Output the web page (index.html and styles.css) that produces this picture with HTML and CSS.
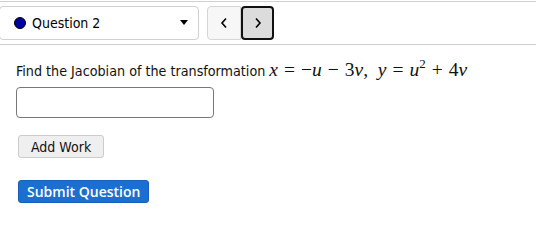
FILE: index.html
```html
<!DOCTYPE html>
<html>
<head>
<meta charset="utf-8">
<link rel="stylesheet" href="styles.css">
</head>
<body>
<div class="topbar">
  <div class="select">
    <span class="dot"></span>
    <span class="qlabel">Question 2</span>
    <span class="caret"></span>
  </div>
  <div class="nav">
    <button class="navbtn prev">
      <svg width="8" height="12" viewBox="0 0 8 12"><path d="M6 1.5 L2 6 L6 10.5" fill="none" stroke="#000" stroke-width="1.6"/></svg>
    </button>
    <button class="navbtn next">
      <svg width="8" height="12" viewBox="0 0 8 12"><path d="M2 1.5 L6 6 L2 10.5" fill="none" stroke="#000" stroke-width="1.6"/></svg>
    </button>
  </div>
</div>
<div class="content">
  <p class="question">Find the Jacobian of the transformation <span class="math"><i>x</i><span class="op">=</span>−<i>u</i><span class="op">−</span>3<i>v</i>,&nbsp;&nbsp;<i>y</i><span class="op">=</span><i>u</i><sup>2</sup><span class="op">+</span>4<i>v</i></span></p>
  <input class="answer" type="text">
  <div class="actions">
    <button class="addwork">Add Work</button>
  </div>
  <div class="actions">
    <button class="submit">Submit Question</button>
  </div>
</div>
</body>
</html>
```
FILE: styles.css
```css
* { box-sizing: border-box; }
body {
  margin: 0;
  background: #fff;
  font-family: "DejaVu Sans Condensed", "DejaVu Sans", sans-serif;
  font-size: 14px;
  color: #000;
}
.topbar {
  margin-top: 1px;
  border-top: 1px solid #d0d0d0;
  border-bottom: 1px solid #d0d0d0;
  height: 44px;
  display: flex;
  align-items: center;
  gap: 8px;
  padding-bottom: 1px;
}
.select {
  width: 200px;
  height: 34px;
  border: 1px solid #d0d0d0;
  border-radius: 4px;
  display: flex;
  align-items: center;
  padding-left: 14px;
  padding-right: 10px;
  margin-left: -1px;
}
.dot {
  width: 12px;
  height: 12px;
  border-radius: 50%;
  background: #0000a0;
  border: 1px solid #000;
  margin-right: 6px;
}
.qlabel { flex: 1; font-size: 14px; }
.caret {
  width: 0; height: 0;
  border-left: 4px solid transparent;
  border-right: 4px solid transparent;
  border-top: 5px solid #000;
}
.nav { display: flex; }
.navbtn {
  width: 34px;
  height: 34px;
  padding: 0;
  display: flex;
  align-items: center;
  justify-content: center;
  font: inherit;
}
.prev {
  background: #f7f7f7;
  border: 1px solid #d6d6d6;
  border-radius: 4px 0 0 4px;
}
.next {
  background: #dcdcdc;
  border: 2px solid #111;
  border-radius: 4px;
  width: 33px;
}
.content { padding: 0 16px; }
.question {
  margin: 15px 0 0;
  line-height: 20px;
  color: #111;
  font-size: 14.2px;
}
.math {
  font-family: "Liberation Serif", serif;
  font-size: 19.5px;
}
.math i { font-style: italic; }
.math .op { padding: 0 6px; }
.math sup { font-size: 13px; line-height: 0; vertical-align: 8px; }
.answer {
  display: block;
  margin-top: 6px;
  width: 198px;
  height: 31px;
  border: 1px solid #777;
  border-radius: 4px;
}
.actions { margin-top: 17px; padding-left: 2px; }
.addwork {
  font: inherit;
  height: 23px;
  padding: 0 12px;
  background: #efefef;
  border: 1px solid #ccc;
  border-radius: 3px;
  color: #111;
}
.actions + .actions { margin-top: 22px; }
.submit {
  font-family: "Open Sans", sans-serif;
  font-size: 14px;
  font-weight: 600;
  height: 23px;
  padding: 0 8px;
  background: #1b6fd0;
  border: 1px solid #1560b8;
  border-radius: 3px;
  color: #fff;
}
```
